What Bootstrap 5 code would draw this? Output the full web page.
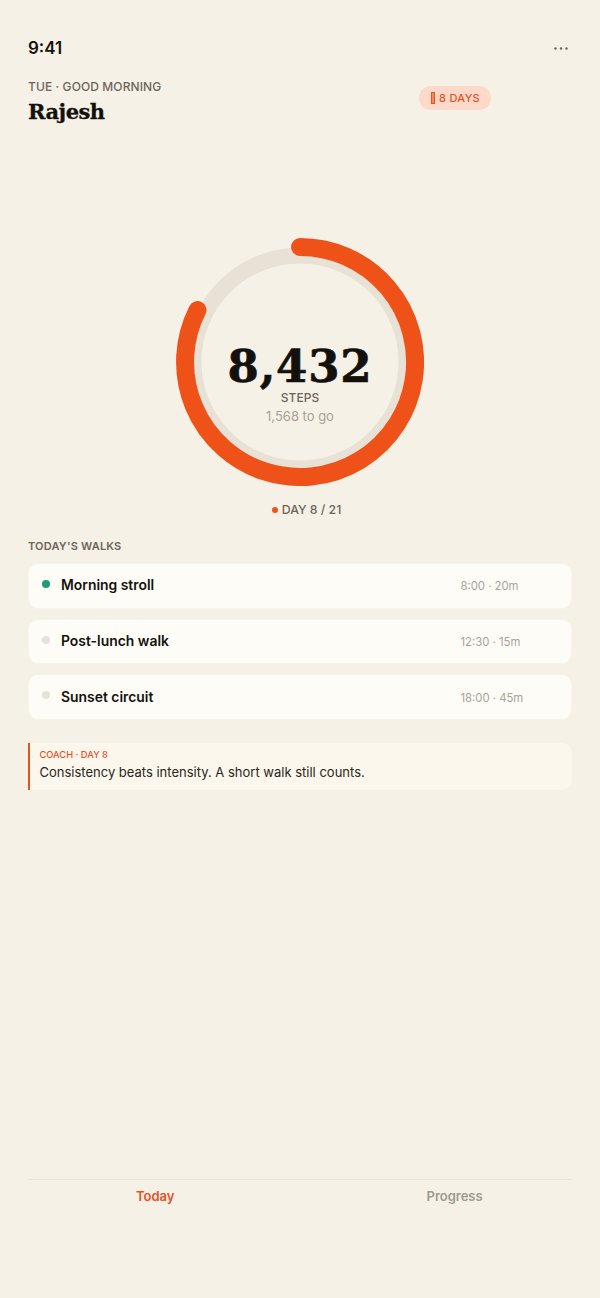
<!doctype html>
<html lang="en"><head><meta charset="utf-8"><title>Today</title>
<link href="https://cdn.jsdelivr.net/npm/bootstrap@5.3.0/dist/css/bootstrap.min.css" rel="stylesheet">
<style>
html,body{height:100%}
body{background:#f6f1e7;font-family:Inter,"Liberation Sans",sans-serif;color:#14110d}
.app-shell{width:600px;height:1298px;padding:0 28px}
.status-row{height:30px;margin-top:33px}
.clock{font-size:17px;font-weight:600;line-height:30px}
.more-dots{width:14px;height:3px;margin-right:4px}
.head-row{margin-top:14px;height:51px}
.eyebrow{font-size:12px;letter-spacing:.1px;font-weight:500;color:#6b655a;line-height:16px;margin-top:2px}
.hello{font-family:"DejaVu Serif",serif;font-weight:700;font-size:21px;line-height:30px;letter-spacing:-.5px;margin:2px 0 0;-webkit-text-stroke:.3px #14110d}
.streak{margin-right:81px;margin-top:9px;height:24px;padding:0 11px 0 12px;border-radius:12px;background:#fdd9c9;color:#e8521e;font-size:11px;font-weight:500;letter-spacing:.3px}
.streak-bar{width:4px;height:12px;background:#f0895f;border:1px solid #e8521e}
.ring-box{width:248px;height:248px;margin:0 auto;margin-top:110px;padding-top:40px}
.ring-svg{position:absolute;inset:0}
.big-num{font-family:"DejaVu Serif",serif;font-weight:700;font-size:45px;line-height:48px;padding-top:3px;letter-spacing:.8px;-webkit-text-stroke:.7px #14110d}
.steps{font-size:12px;font-weight:500;color:#6b655a;line-height:14px}
.togo{font-size:13px;color:#a8a297;line-height:18px;margin-top:2px}
.day-row{font-size:12.3px;font-weight:500;color:#6b655a;margin-top:14px;line-height:20px;padding-left:13px}
.day-dot{width:6px;height:6px;border-radius:50%;background:#ee5218}
.sect{font-size:11px;font-weight:600;letter-spacing:.2px;color:#6b655a;line-height:14px;margin-top:19px;margin-bottom:10px}
.walk{height:45.6px;background:#fefcf7;border:1px solid #f8f4ea;border-radius:10px;padding:0 13px}
.walk+.walk{margin-top:10px}
.walk-dot{width:8px;height:8px;border-radius:50%;background:#e6e2da;margin-right:11px;margin-top:-3px}
.walk-dot.on{background:#1f9d72}
.walk-name{font-size:13.9px;font-weight:600}
.walk-time{font-size:11.3px;color:#a8a297;width:97.5px;margin-top:2px}
.coach{margin-top:23px;height:47px;background:#fbf7ed;border-left:2px solid #e8521e;border-radius:0 10px 10px 0;padding:6px 9.5px}
.coach-k{font-size:9.3px;font-weight:500;color:#e8521e;line-height:12px}
.coach-t{font-size:13px;line-height:20px;color:#2a2620;margin-top:1px}
.tabs{margin-top:auto;margin-bottom:84px;border-top:1px solid #ebe5d9;height:35px;padding-left:108px;gap:252px}
.tab-a,.tab-b{font-size:13px;font-weight:600;line-height:33px}
.tab-a{color:#e8521e}.tab-b{color:#a09a8f}
</style></head><body>
<div class="app-shell d-flex flex-column">
 <div class="status-row d-flex justify-content-between align-items-center">
  <span class="clock">9:41</span>
  <svg class="more-dots" viewBox="0 0 14 3"><circle cx="1.5" cy="1.5" r="1.2" fill="#6b655a"/><circle cx="7" cy="1.5" r="1.2" fill="#6b655a"/><circle cx="12.5" cy="1.5" r="1.2" fill="#6b655a"/></svg>
 </div>
 <div class="head-row d-flex justify-content-between align-items-start">
  <div><div class="eyebrow">TUE · GOOD MORNING</div><h1 class="hello">Rajesh</h1></div>
  <div class="streak d-flex align-items-center gap-1"><span class="streak-bar"></span>8 DAYS</div>
 </div>
 <div class="ring-box position-relative d-flex flex-column align-items-center justify-content-center">
  <svg class="ring-svg" viewBox="0 0 248 248" aria-hidden="true">
   <circle cx="124" cy="124" r="106.5" fill="none" stroke="#e8e1d5" stroke-width="16"/>
   <path d="M124 9 A115 115 0 1 1 21.5 72" fill="none" stroke="#ee5218" stroke-width="18" stroke-linecap="round"/>
  </svg>
  <div class="big-num position-relative">8,432</div>
  <div class="steps position-relative">STEPS</div>
  <div class="togo position-relative">1,568 to go</div>
 </div>
 <div class="day-row d-flex justify-content-center align-items-center gap-1"><span class="day-dot"></span>DAY 8 / 21</div>
 <div class="sect">TODAY'S WALKS</div>
 <div>
  <div class="walk d-flex align-items-center"><span class="walk-dot on"></span><span class="walk-name flex-grow-1">Morning stroll</span><span class="walk-time">8:00 · 20m</span></div>
  <div class="walk d-flex align-items-center"><span class="walk-dot"></span><span class="walk-name flex-grow-1">Post-lunch walk</span><span class="walk-time">12:30 · 15m</span></div>
  <div class="walk d-flex align-items-center"><span class="walk-dot"></span><span class="walk-name flex-grow-1">Sunset circuit</span><span class="walk-time">18:00 · 45m</span></div>
 </div>
 <div class="coach"><div class="coach-k">COACH · DAY 8</div><div class="coach-t">Consistency beats intensity. A short walk still counts.</div></div>
 <div class="tabs d-flex"><span class="tab-a">Today</span><span class="tab-b">Progress</span></div>
</div>
<script src="https://cdn.jsdelivr.net/npm/bootstrap@5.3.0/dist/js/bootstrap.bundle.min.js"></script>
</body></html>
